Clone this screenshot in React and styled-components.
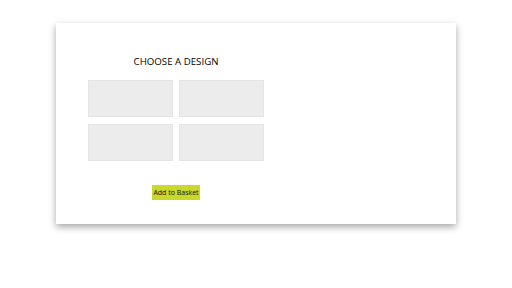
import React from "react";
import styled, { createGlobalStyle } from "styled-components";

const Global = createGlobalStyle`
  html, body { margin: 0; padding: 0; background: #fff; }
  body { font-family: "Open Sans", "Liberation Sans", sans-serif; }
`;

const Page = styled.div`
  padding: 23px 56px;
`;

const Card = styled.div`
  width: 400px;
  height: 201px;
  box-sizing: border-box;
  background: #fff;
  box-shadow: 0 3px 7px rgba(0, 0, 0, 0.35);
  padding: 31px 32px 0;
  display: flex;
`;

const Picker = styled.div`
  width: 176px;
  display: flex;
  flex-direction: column;
  align-items: center;
`;

const Title = styled.h2`
  margin: 0 0 10px;
  font-size: 9.7px;
  line-height: 16px;
  font-weight: 400;
  color: #000;
`;

const Grid = styled.div`
  display: grid;
  grid-template-columns: 85px 85px;
  grid-auto-rows: 37px;
  column-gap: 6px;
  row-gap: 7px;
`;

const Tile = styled.div`
  background: #ececec;
  border: 1px solid #e4e4e4;
  box-sizing: border-box;
`;

const Button = styled.button`
  margin-top: 24px;
  width: 48px;
  height: 15px;
  padding: 0;
  border: none;
  background: #c9d82b;
  color: #111;
  font-family: "Open Sans", "Liberation Sans", sans-serif;
  font-size: 7px;
  line-height: 15px;
`;

const designs = [1, 2, 3, 4];

export default function App() {
  return (
    <>
      <Global />
      <Page>
        <Card>
          <Picker>
            <Title>CHOOSE A DESIGN</Title>
            <Grid>
              {designs.map((d) => (
                <Tile key={d} />
              ))}
            </Grid>
            <Button>Add to Basket</Button>
          </Picker>
        </Card>
      </Page>
    </>
  );
}
